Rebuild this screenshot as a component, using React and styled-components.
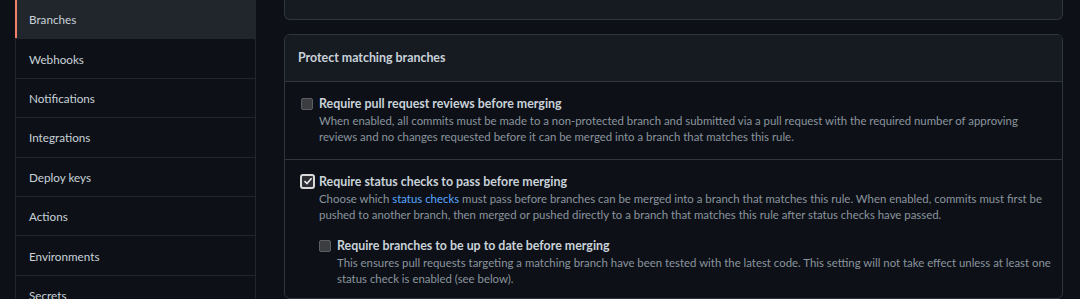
import React from 'react';
import styled, { createGlobalStyle } from 'styled-components';

const GlobalStyle = createGlobalStyle`
  body {
    margin: 0;
    background: #0d1117;
    font-family: Lato, "Noto Sans", "Liberation Sans", sans-serif;
    color: #c9d1d9;
  }
`;

const menu = ['Branches', 'Webhooks', 'Notifications', 'Integrations', 'Deploy keys', 'Actions', 'Environments', 'Secrets'];

export default function App() {
  return (
    <>
      <GlobalStyle />
      <Page>
        <Sidebar>
          {menu.map((m, i) => (
            <MenuItem key={m} $active={i === 0}>{m}</MenuItem>
          ))}
        </Sidebar>
        <Main>
          <TopCard />
          <Box>
            <BoxHeader>Protect matching branches</BoxHeader>
            <Item>
              <Row>
                <Check />
                <div>
                  <Title>Require pull request reviews before merging</Title>
                  <Note>
                    When enabled, all commits must be made to a non-protected branch and submitted via a pull request with the required number of approving reviews and no changes requested before it can be merged into a branch that matches this rule.
                  </Note>
                </div>
              </Row>
            </Item>
            <Item>
              <Row>
                <Check $checked>
                  <svg width="10" height="10" viewBox="0 0 10 10">
                    <path d="M1.5 5.2 L4 7.6 L8.6 2.2" fill="none" stroke="#e6e6e6" strokeWidth="1.6" />
                  </svg>
                </Check>
                <div>
                  <Title>Require status checks to pass before merging</Title>
                  <Note>
                    Choose which <Link>status checks</Link> must pass before branches can be merged into a branch that matches this rule. When enabled, commits must first be pushed to another branch, then merged or pushed directly to a branch that matches this rule after status checks have passed.
                  </Note>
                  <SubRow>
                    <Check />
                    <div>
                      <Title>Require branches to be up to date before merging</Title>
                      <Note>
                        This ensures pull requests targeting a matching branch have been tested with the latest code. This setting will not take effect unless at least one status check is enabled (see below).
                      </Note>
                    </div>
                  </SubRow>
                </div>
              </Row>
            </Item>
          </Box>
        </Main>
      </Page>
    </>
  );
}

const Page = styled.div`
  display: flex;
  gap: 28px;
  padding: 0 17px 0 15px;
  height: 299px;
  overflow: hidden;
`;

const Sidebar = styled.nav`
  width: 239px;
  flex-shrink: 0;
  border-left: 1px solid #21262d;
  border-right: 1px solid #21262d;
  align-self: flex-start;
`;

const MenuItem = styled.div`
  height: 38.4px;
  display: flex;
  align-items: center;
  font-size: 11.7px;
  color: #c9d1d9;
  border-bottom: 1px solid #21262d;
  background: ${(p) => (p.$active ? '#21262d' : 'transparent')};
  box-shadow: ${(p) => (p.$active ? 'inset 2px 0 0 #f78166' : 'none')};
  margin-left: ${(p) => (p.$active ? '-1px' : '0')};
  padding-left: ${(p) => (p.$active ? '14px' : '13px')};
`;

const Main = styled.div`
  flex: 1;
  display: flex;
  flex-direction: column;
  gap: 14px;
`;

const TopCard = styled.div`
  height: 20px;
  background: #161b22;
  border: 1px solid #30363d;
  border-top: none;
  border-radius: 0 0 6px 6px;
  box-sizing: border-box;
`;

const Box = styled.section`
  border: 1px solid #30363d;
  border-radius: 6px;
  overflow: hidden;
`;

const BoxHeader = styled.div`
  height: 47px;
  box-sizing: border-box;
  display: flex;
  align-items: center;
  padding-left: 13px;
  background: #161b22;
  border-bottom: 1px solid #30363d;
  font-size: 12.4px;
  font-weight: 700;
`;

const Item = styled.div`
  padding: 13px 8px 14px 16px;
  & + & {
    border-top: 1px solid #30363d;
  }
`;

const Row = styled.div`
  display: flex;
  align-items: flex-start;
`;

const SubRow = styled(Row)`
  margin-top: 14px;
`;

const Check = styled.span`
  flex-shrink: 0;
  box-sizing: border-box;
  width: ${(p) => (p.$checked ? '15px' : '12px')};
  height: ${(p) => (p.$checked ? '15px' : '12px')};
  margin: ${(p) => (p.$checked ? '1px 4px 0 -1px' : '3px 6px 0 0')};
  border-radius: ${(p) => (p.$checked ? '3px' : '2px')};
  border: ${(p) => (p.$checked ? '2px solid #d9d9d9' : '1px solid #5a5d61')};
  background: ${(p) => (p.$checked ? '#2b2e33' : '#3b3d41')};
  display: flex;
  align-items: center;
  justify-content: center;
`;

const Title = styled.div`
  font-size: 12.4px;
  font-weight: 700;
  line-height: 18px;
  color: #c9d1d9;
`;

const Note = styled.p`
  margin: 0;
  font-size: 11.4px;
  line-height: 16px;
  color: #8b949e;
`;

const Link = styled.a`
  color: #58a6ff;
  text-decoration: none;
`;
